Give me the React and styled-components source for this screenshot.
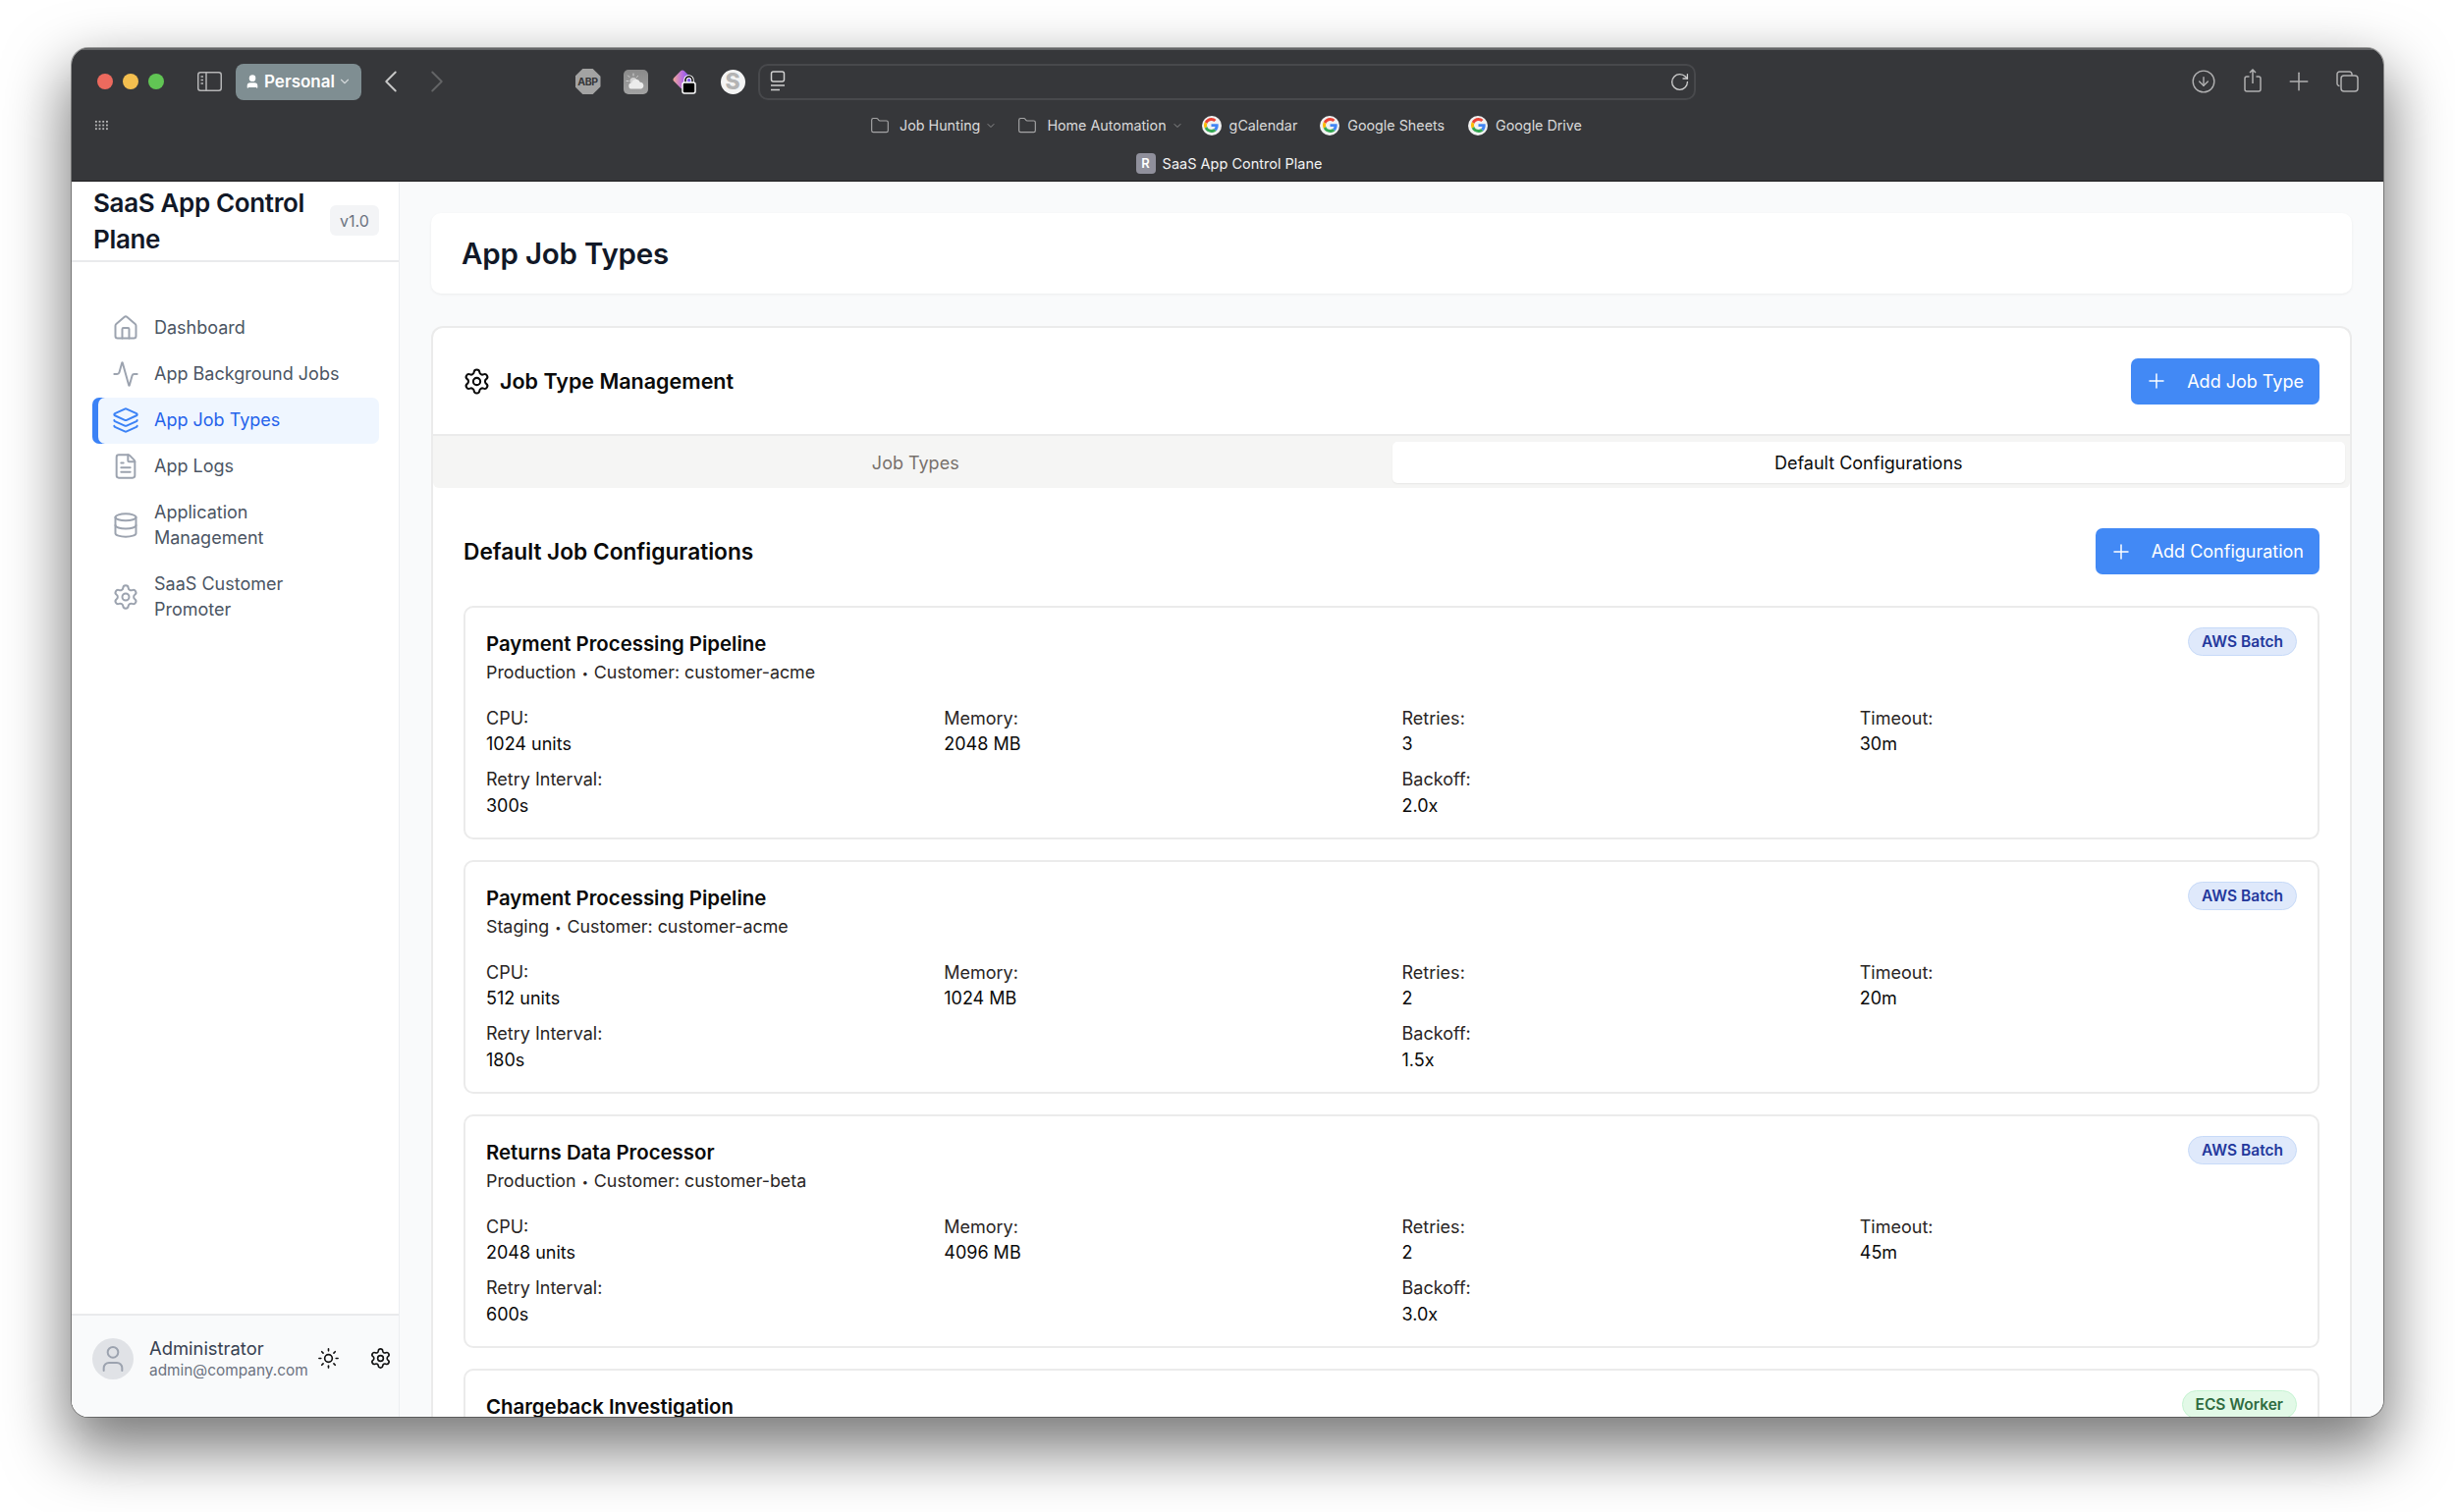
import React from 'react';
import styled, { createGlobalStyle } from 'styled-components';
import { House, Activity, Layers, FileText, Database, Settings, Sun, User, Plus, ChevronLeft, ChevronRight, ChevronDown, RotateCw, Folder, ArrowDownCircle } from 'lucide-react';

const GlobalStyle = createGlobalStyle`
	html, body {
		margin: 0;
		padding: 0;
		background: #fff;
		font-family: Inter, "Liberation Sans", sans-serif;
		-webkit-font-smoothing: antialiased;
	}
	* { box-sizing: border-box; }
`;

const Page = styled.div`
	width: 2500px;
	height: 1540px;
	padding: 49px 73px 97px;
	overflow: hidden;
`;

const Browser = styled.div`
	width: 2354px;
	height: 1394px;
	border-radius: 17px;
	overflow: hidden;
	display: flex;
	flex-direction: column;
	box-shadow: 0 28px 62px 6px rgba(0, 0, 0, 0.52), 0 0 0 1px rgba(0, 0, 0, 0.35);
`;

const Chrome = styled.div`
	height: 136px;
	flex: none;
	background: #36373a;
	border-top: 2px solid #626365;
	border-bottom: 1px solid #1d1d1f;
	color: #dcdcdc;
`;

const TopRow = styled.div`
	height: 61px;
	padding-top: 3px;
	display: flex;
	align-items: center;
`;

const Lights = styled.div`
	display: flex;
	gap: 10px;
	margin-left: 26px;
	width: 102px;
`;

const Light = styled.span`
	width: 16px;
	height: 16px;
	border-radius: 50%;
	background: ${(props) => props.$color};
`;

const SidebarGlyph = styled.svg`
	margin-right: 14px;
	flex: none;
`;

const ProfilePill = styled.div`
	width: 128px;
	height: 37px;
	border-radius: 8px;
	background: #7f8e92;
	display: flex;
	align-items: center;
	padding-left: 9px;
	gap: 4px;
	color: #fff;
	font-size: 17px;
	font-weight: 600;
`;

const PillChevron = styled(ChevronDown)`
	margin-left: -1px;
	opacity: 0.65;
`;

const NavArrows = styled.div`
	display: flex;
	align-items: center;
	gap: 9px;
	margin-left: 11px;
	width: 206.5px;
	flex: none;
`;

const Extensions = styled.div`
	display: flex;
	align-items: center;
	gap: 24px;
	width: 186px;
	flex: none;
`;

const Abp = styled.div`
	width: 26px;
	height: 26px;
	background: #a3a3a3;
	clip-path: polygon(30% 0, 70% 0, 100% 30%, 100% 70%, 70% 100%, 30% 100%, 0 70%, 0 30%);
	color: #36373a;
	font-size: 10.5px;
	font-weight: 700;
	display: flex;
	align-items: center;
	justify-content: center;
	letter-spacing: -0.4px;
	flex: none;
	margin-right: -1px;
`;

const WeatherTile = styled.div`
	width: 25px;
	height: 25px;
	flex: none;
	border-radius: 5px;
	background: linear-gradient(#8a8a8a, #a2a2a2);
	display: flex;
	align-items: center;
	justify-content: center;
`;

const SkipBadge = styled.div`
	width: 25px;
	height: 25px;
	flex: none;
	border-radius: 50%;
	background: #f4f4f4;
	color: #b4b4b4;
	font-size: 23px;
	font-weight: 800;
	display: flex;
	align-items: center;
	justify-content: center;
`;

const UrlBar = styled.div`
	width: 955px;
	height: 37px;
	flex: none;
	border: 2px solid #48494c;
	border-radius: 10px;
	display: flex;
	align-items: center;
	justify-content: space-between;
	padding: 0 3.5px 0 10px;
	color: #cfcfcf;
`;

const RightTools = styled.div`
	margin-left: auto;
	margin-right: 25px;
	display: flex;
	align-items: center;
	gap: 23px;
	color: #b0b0b1;
`;

const ShareGlyph = styled.svg`
	margin-left: 5px;
	margin-bottom: 3px;
`;

const BookmarkRow = styled.div`
	height: 31px;
	display: flex;
	align-items: center;
`;

const GridDots = styled.div`
	width: 15px;
	height: 11px;
	margin-left: 23px;
	background-image: radial-gradient(circle, #b9b9ba 1.1px, transparent 1.3px);
	background-size: 3.7px 3.7px;
`;

const Bookmarks = styled.div`
	display: flex;
	align-items: center;
	margin-left: 775px;
`;

const Bookmark = styled.div`
	display: flex;
	align-items: center;
	gap: ${(props) => (props.$folder ? 10 : 8)}px;
	margin-right: ${(props) => props.$after}px;
	font-size: 14.3px;
	font-weight: 400;
	color: #dadada;
	white-space: nowrap;
`;

const BookmarkChevron = styled(ChevronDown)`
	margin-left: -5px;
	color: #8e8e8f;
`;

const FolderIcon = styled(Folder)`
	color: #a5a5a6;
`;

const GoogleDot = styled.span`
	width: 20px;
	height: 20px;
	border-radius: 50%;
	background: #f1f1f1;
	display: flex;
	align-items: center;
	justify-content: center;
`;

const TabRow = styled.div`
	height: 42px;
	padding: 4px 0 0 3px;
	display: flex;
	justify-content: center;
	align-items: center;
	gap: 7px;
	font-size: 14.5px;
	color: #f2f2f2;
`;

const TabFavicon = styled.span`
	width: 20px;
	height: 21px;
	border-radius: 4px;
	background: #90909c;
	color: #fff;
	font-size: 13px;
	font-weight: 600;
	display: flex;
	align-items: center;
	justify-content: center;
`;

const AppBody = styled.div`
	flex: 1;
	min-height: 0;
	display: flex;
	background: #f9fafb;
`;

const Sidebar = styled.aside`
	width: 334px;
	flex: none;
	background: #fff;
	border-right: 1px solid #eceef1;
	display: flex;
	flex-direction: column;
`;

const Brand = styled.div`
	height: 82px;
	flex: none;
	padding: 0 20px 0 22px;
	border-bottom: 2px solid #e9eaec;
	display: flex;
	align-items: center;
	justify-content: space-between;
`;

const BrandName = styled.h1`
	margin: 0;
	width: 232px;
	font-size: 26px;
	line-height: 37px;
	font-weight: 600;
	letter-spacing: -0.35px;
	color: #111827;
`;

const Version = styled.span`
	width: 50px;
	height: 31px;
	border-radius: 6px;
	background: #f3f4f6;
	color: #6b7280;
	font-size: 16px;
	display: flex;
	align-items: center;
	justify-content: center;
	margin-bottom: 1px;
`;

const Nav = styled.nav`
	flex: 1;
	padding: 43.5px 20px 0 21px;
	display: flex;
	flex-direction: column;
`;

const NavItem = styled.a`
	display: flex;
	align-items: center;
	gap: 15px;
	padding: 10.5px 28px 10.5px 20px;
	border-radius: 7px;
	font-size: 18px;
	line-height: 26px;
	font-weight: 400;
	color: ${(props) => (props.$active ? '#2563eb' : '#4b5563')};
	background: ${(props) => (props.$active ? '#eff6ff' : 'transparent')};
	box-shadow: ${(props) => (props.$active ? 'inset 6px 0 0 #3b82f6' : 'none')};
	svg {
		flex: none;
		margin: -1px 0;
		color: ${(props) => (props.$active ? '#3b82f6' : '#9ca3af')};
	}
`;

const SidebarFooter = styled.div`
	height: 105px;
	flex: none;
	background: #f9fafb;
	border-top: 2px solid #e9eaec;
	display: flex;
	align-items: center;
	padding: 0 0 16px 21px;
`;

const Avatar = styled.div`
	width: 42px;
	height: 42px;
	border-radius: 50%;
	background: #e0e2e6;
	color: #9ca3af;
	display: flex;
	align-items: center;
	justify-content: center;
	flex: none;
	margin-right: 16px;
`;

const UserInfo = styled.div`
	width: 170px;
	flex: none;
`;

const UserName = styled.div`
	font-size: 18.4px;
	line-height: 24px;
	color: #374151;
`;

const UserMail = styled.div`
	font-size: 15.4px;
	line-height: 22px;
	color: #6b7280;
`;

const FooterActions = styled.div`
	display: flex;
	align-items: center;
	gap: 30px;
	color: #111;
	margin-left: 0.5px;
`;

const Main = styled.main`
	flex: 1;
	min-width: 0;
	padding: 32px 32px 0;
	overflow: hidden;
`;

const PageHeader = styled.header`
	height: 82px;
	background: #fff;
	border-radius: 10px;
	box-shadow: 0 1px 3px rgba(0, 0, 0, 0.06);
	display: flex;
	align-items: center;
	padding: 0 31px;
	margin-bottom: 33px;
`;

const PageTitle = styled.h2`
	margin: 0;
	font-size: 29.5px;
	font-weight: 600;
	letter-spacing: -0.2px;
	color: #111827;
`;

const Panel = styled.section`
	background: #fff;
	border: 2px solid #ebebeb;
	border-bottom: 0;
	border-radius: 12px 12px 0 0;
`;

const PanelHeader = styled.div`
	height: 110px;
	display: flex;
	align-items: center;
	justify-content: space-between;
	padding: 0 31px 0 30px;
	border-bottom: 2px solid #ebebeb;
`;

const PanelTitle = styled.h3`
	margin: 0;
	display: flex;
	align-items: center;
	gap: 9px;
	font-size: 21.5px;
	font-weight: 600;
	color: #0a0a0a;
`;

const PrimaryButton = styled.button`
	height: 47px;
	border: 0;
	border-radius: 7px;
	background: #4289f5;
	color: #fff;
	font-family: inherit;
	font-size: 18px;
	font-weight: 400;
	display: flex;
	align-items: center;
	gap: 19px;
	padding: 0 16px 0 14px;
`;

const TabList = styled.div`
	height: 53px;
	background: #f5f5f4;
	border-radius: 0 0 6px 6px;
	padding: 6px 5px 5px 6px;
	display: grid;
	grid-template-columns: 1fr 1fr;
`;

const Tab = styled.div`
	display: flex;
	align-items: center;
	justify-content: center;
	font-size: 18px;
	font-weight: 400;
	border-radius: 5px;
	color: ${(props) => (props.$active ? '#0a0a0a' : '#78716c')};
	background: ${(props) => (props.$active ? '#fff' : 'transparent')};
	box-shadow: ${(props) => (props.$active ? '0 1px 2px rgba(0, 0, 0, 0.06)' : 'none')};
`;

const TabPanel = styled.div`
	padding: 41px 31px 0;
`;

const SectionHead = styled.div`
	display: flex;
	align-items: center;
	justify-content: space-between;
	height: 47px;
	margin-bottom: 32px;
`;

const SectionTitle = styled.h4`
	margin: 0;
	font-size: 22.7px;
	font-weight: 600;
	color: #0a0a0a;
`;

const ConfigList = styled.div`
	display: flex;
	flex-direction: column;
	gap: 21px;
`;

const ConfigCard = styled.article`
	border: 2px solid #ebebeb;
	border-radius: 10px;
	padding: 20px 21px 21px;
	height: 238px;
	flex: none;
`;

const CardHead = styled.div`
	display: flex;
	justify-content: space-between;
	align-items: flex-start;
	margin-bottom: 19.5px;
`;

const CardTitle = styled.div`
	font-size: 20.4px;
	line-height: 33px;
	font-weight: 600;
	color: #0a0a0a;
`;

const CardSub = styled.div`
	font-size: 17.85px;
	line-height: 25px;
	color: #292524;
`;

const Dot = styled.span`
	font-size: 11px;
	margin: 0 1px;
	vertical-align: 1px;
`;

const Badge = styled.span`
	height: 29px;
	padding: 0 13px;
	border-radius: 15px;
	font-size: 15.5px;
	font-weight: 600;
	display: flex;
	align-items: center;
	background: ${(props) => (props.$kind === 'ecs' ? '#e2f9e7' : '#dfe9fb')};
	border: 1.5px solid ${(props) => (props.$kind === 'ecs' ? '#c6f3d2' : '#c7daf8')};
	color: ${(props) => (props.$kind === 'ecs' ? '#2f6b3f' : '#23389c')};
`;

const Specs = styled.dl`
	margin: 0;
	display: grid;
	grid-template-columns: repeat(4, 1fr);
	gap: 9.5px 21px;
`;

const Spec = styled.div`
	grid-column: ${(props) => props.$col || 'auto'};
	font-size: 18px;
	line-height: 26.5px;
`;

const SpecLabel = styled.dt`
	color: #292524;
`;

const SpecValue = styled.dd`
	margin: 0;
	font-weight: 400;
	color: #0a0a0a;
`;

const GoogleMark = () => (
	<svg width="15" height="15" viewBox="0 0 48 48">
		<path fill="#EA4335" d="M24 9.5c3.54 0 6.71 1.22 9.21 3.6l6.85-6.85C35.9 2.38 30.47 0 24 0 14.62 0 6.51 5.38 2.56 13.22l7.98 6.19C12.43 13.72 17.74 9.5 24 9.5z" />
		<path fill="#4285F4" d="M46.98 24.55c0-1.57-.15-3.09-.38-4.55H24v9.02h12.94c-.58 2.96-2.26 5.48-4.78 7.18l7.73 6c4.51-4.18 7.09-10.36 7.09-17.65z" />
		<path fill="#FBBC05" d="M10.53 28.59c-.48-1.45-.76-2.99-.76-4.59s.27-3.14.76-4.59l-7.98-6.19C.92 16.46 0 20.12 0 24c0 3.88.92 7.54 2.56 10.78l7.97-6.19z" />
		<path fill="#34A853" d="M24 48c6.48 0 11.93-2.13 16.01-5.81l-7.73-6c-2.15 1.45-4.92 2.3-8.28 2.3-6.26 0-11.57-4.22-13.47-9.91l-7.98 6.19C6.51 42.62 14.62 48 24 48z" />
	</svg>
);

const PasswordsIcon = () => (
	<svg width="26" height="26" viewBox="0 0 26 26">
		<defs>
			<linearGradient id="pw" x1="1" y1="0" x2="0" y2="1">
				<stop offset="0" stopColor="#5a55ee" />
				<stop offset="0.5" stopColor="#b86be0" />
				<stop offset="1" stopColor="#f7b08e" />
			</linearGradient>
		</defs>
		<rect x="3.5" y="3.5" width="15" height="15" rx="3" transform="rotate(45 11 11)" fill="url(#pw)" />
		<path d="M14 15v-3.500a3.500 3.500 0 0 1 7 0V15" fill="none" stroke="#fff" strokeWidth="3.500" />
		<path d="M14 15v-3.500a3.500 3.500 0 0 1 7 0V15" fill="none" stroke="#000" strokeWidth="1.500" />
		<rect x="11" y="14" width="13" height="11" rx="2" fill="#000" stroke="#fff" strokeWidth="1.500" />
	</svg>
);

const WeatherIcon = () => (
	<svg width="21" height="18" viewBox="0 0 21 18">
		<g stroke="#cfcfcf" strokeWidth="1" strokeLinecap="round">
			<path d="M8 1v2M2.500 3l1.500 1.500M1 8.500h2M12.500 3.500 11.500 4.500" />
		</g>
		<circle cx="8" cy="8.500" r="3.500" fill="#d2d2d2" />
		<path fill="#ececec" d="M6.500 16.500a3 3 0 0 1-.300-6 4.500 4.500 0 0 1 8.600-.800 3.500 3.500 0 0 1 1.200 6.800z" />
	</svg>
);

const TabsGlyph = () => (
	<svg width="16" height="22" viewBox="0 0 16 22" fill="none" stroke="#cfcfcf" strokeWidth="1.5">
		<rect x="1.5" y="1" width="13" height="10" rx="2" />
		<path d="M1 15h14M1 19.500h9" />
	</svg>
);

const ShareIcon = () => (
	<ShareGlyph width="18" height="24" viewBox="0 0 18 24" fill="none" stroke="currentColor" strokeWidth="1.500">
		<path d="M5.500 8H3a2 2 0 0 0-2 2v11a2 2 0 0 0 2 2h12a2 2 0 0 0 2-2V10a2 2 0 0 0-2-2h-2.500" />
		<path d="M9 15V1M6 4l3-3 3 3" />
	</ShareGlyph>
);

const TabsOverview = () => (
	<svg width="23" height="22" viewBox="0 0 23 22" fill="none" stroke="currentColor" strokeWidth="1.500">
		<rect x="5" y="5" width="17" height="16" rx="3" />
		<path d="M3.500 15.500A2.500 2.500 0 0 1 1 13V3.500A2.500 2.500 0 0 1 3.500 1h10A2.500 2.500 0 0 1 16 3.500V5" />
	</svg>
);

const navItems = [
	{ label: 'Dashboard', icon: House },
	{ label: 'App Background Jobs', icon: Activity },
	{ label: 'App Job Types', icon: Layers, active: true },
	{ label: 'App Logs', icon: FileText },
	{ label: 'Application Management', icon: Database },
	{ label: 'SaaS Customer Promoter', icon: Settings },
];

const configs = [
	{ name: 'Payment Processing Pipeline', env: 'Production', customer: 'customer-acme', kind: 'aws', cpu: 1024, memory: 2048, retries: 3, timeout: '30m', interval: '300s', backoff: '2.0x' },
	{ name: 'Payment Processing Pipeline', env: 'Staging', customer: 'customer-acme', kind: 'aws', cpu: 512, memory: 1024, retries: 2, timeout: '20m', interval: '180s', backoff: '1.5x' },
	{ name: 'Returns Data Processor', env: 'Production', customer: 'customer-beta', kind: 'aws', cpu: 2048, memory: 4096, retries: 2, timeout: '45m', interval: '600s', backoff: '3.0x' },
	{ name: 'Chargeback Investigation', env: 'Production', customer: 'customer-beta', kind: 'ecs', cpu: 1024, memory: 2048, retries: 3, timeout: '30m', interval: '300s', backoff: '2.0x' },
];

const Item = ({ label, value, col }) => (
	<Spec $col={col}>
		<SpecLabel>{label}:</SpecLabel>
		<SpecValue>{value}</SpecValue>
	</Spec>
);

const Config = ({ config }) => (
	<ConfigCard>
		<CardHead>
			<div>
				<CardTitle>{config.name}</CardTitle>
				<CardSub>{config.env} <Dot>•</Dot> Customer: {config.customer}</CardSub>
			</div>
			<Badge $kind={config.kind}>{config.kind === 'ecs' ? 'ECS Worker' : 'AWS Batch'}</Badge>
		</CardHead>
		<Specs>
			<Item label="CPU" value={`${config.cpu} units`} />
			<Item label="Memory" value={`${config.memory} MB`} />
			<Item label="Retries" value={config.retries} />
			<Item label="Timeout" value={config.timeout} />
			<Item label="Retry Interval" value={config.interval} />
			<Item label="Backoff" value={config.backoff} col={3} />
		</Specs>
	</ConfigCard>
);

export default function App() {
	return (
		<Page>
			<GlobalStyle />
			<Browser>
				<Chrome>
					<TopRow>
						<Lights>
							<Light $color="#ed6a5e" />
							<Light $color="#f4bf4f" />
							<Light $color="#61c554" />
						</Lights>
						<SidebarGlyph width="25" height="20" viewBox="0 0 25 20" fill="none" stroke="#b5b5b6" strokeWidth="1.500">
							<rect x="0.750" y="0.750" width="23.500" height="18.500" rx="2.500" />
							<path d="M9 1v18" />
							<path d="M3.500 5h2.500M3.500 8.500h2.500M3.500 12h2.500" />
						</SidebarGlyph>
						<ProfilePill>
							<User size={16} fill="#fff" strokeWidth={2} />
							Personal
							<PillChevron size={14} />
						</ProfilePill>
						<NavArrows>
							<ChevronLeft size={38} strokeWidth={1.2} color="#c8c8c8" />
							<ChevronRight size={38} strokeWidth={1.2} color="#636466" />
						</NavArrows>
						<Extensions>
							<Abp>ABP</Abp>
							<WeatherTile><WeatherIcon /></WeatherTile>
							<PasswordsIcon />
							<SkipBadge>S</SkipBadge>
						</Extensions>
						<UrlBar>
							<TabsGlyph />
							<RotateCw size={21} strokeWidth={1.5} />
						</UrlBar>
						<RightTools>
							<ArrowDownCircle size={26} strokeWidth={1.3} />
							<ShareIcon />
							<Plus size={30} strokeWidth={1.2} />
							<TabsOverview />
						</RightTools>
					</TopRow>
					<BookmarkRow>
						<GridDots />
						<Bookmarks>
							<Bookmark $folder $after={21}><FolderIcon size={20} strokeWidth={1.4} />Job Hunting<BookmarkChevron size={12} /></Bookmark>
							<Bookmark $folder $after={19}><FolderIcon size={20} strokeWidth={1.4} />Home Automation<BookmarkChevron size={12} /></Bookmark>
							<Bookmark $after={23}><GoogleDot><GoogleMark /></GoogleDot>gCalendar</Bookmark>
							<Bookmark $after={24}><GoogleDot><GoogleMark /></GoogleDot>Google Sheets</Bookmark>
							<Bookmark $after={0}><GoogleDot><GoogleMark /></GoogleDot>Google Drive</Bookmark>
						</Bookmarks>
					</BookmarkRow>
					<TabRow>
						<TabFavicon>R</TabFavicon>
						SaaS App Control Plane
					</TabRow>
				</Chrome>
				<AppBody>
					<Sidebar>
						<Brand>
							<BrandName>SaaS App Control Plane</BrandName>
							<Version>v1.0</Version>
						</Brand>
						<Nav>
							{navItems.map((item) => (
								<NavItem key={item.label} $active={item.active}>
									<item.icon size={28} strokeWidth={1.7} />
									<span>{item.label}</span>
								</NavItem>
							))}
						</Nav>
						<SidebarFooter>
							<Avatar><User size={32} strokeWidth={1.5} /></Avatar>
							<UserInfo>
								<UserName>Administrator</UserName>
								<UserMail>admin@company.com</UserMail>
							</UserInfo>
							<FooterActions>
								<Sun size={23} strokeWidth={1.7} />
								<Settings size={23} strokeWidth={1.7} />
							</FooterActions>
						</SidebarFooter>
					</Sidebar>
					<Main>
						<PageHeader>
							<PageTitle>App Job Types</PageTitle>
						</PageHeader>
						<Panel>
							<PanelHeader>
								<PanelTitle><Settings size={29} strokeWidth={1.7} />Job Type Management</PanelTitle>
								<PrimaryButton><Plus size={24} strokeWidth={1.5} />Add Job Type</PrimaryButton>
							</PanelHeader>
							<TabList>
								<Tab>Job Types</Tab>
								<Tab $active>Default Configurations</Tab>
							</TabList>
							<TabPanel>
								<SectionHead>
									<SectionTitle>Default Job Configurations</SectionTitle>
									<PrimaryButton><Plus size={24} strokeWidth={1.5} />Add Configuration</PrimaryButton>
								</SectionHead>
								<ConfigList>
									{configs.map((config) => (
										<Config key={config.name + config.env} config={config} />
									))}
								</ConfigList>
							</TabPanel>
						</Panel>
					</Main>
				</AppBody>
			</Browser>
		</Page>
	);
}
